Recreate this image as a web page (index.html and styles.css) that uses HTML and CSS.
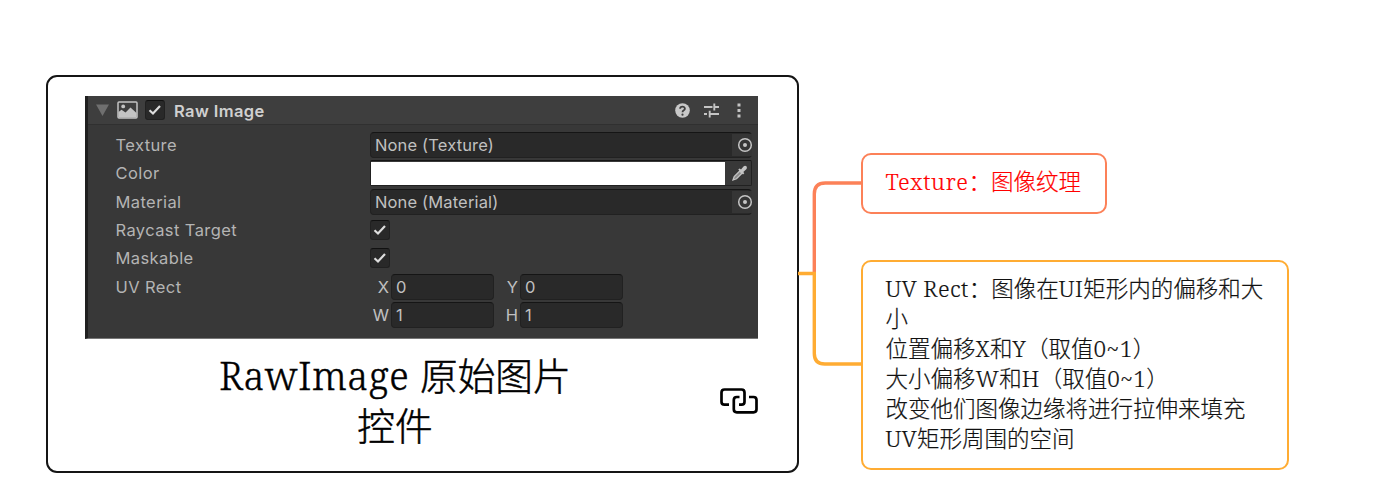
FILE: index.html
```html
<!DOCTYPE html>
<html lang="zh-CN">
<head>
<meta charset="utf-8">
<title>RawImage</title>
<link rel="stylesheet" href="styles.css">
</head>
<body>
<main class="map">
  <section class="root-node">
    <div class="inspector">
      <header class="head">
        <svg class="fold" width="13" height="12" viewBox="0 0 13 12"><path d="M0 0.5H13L6.5 12Z" fill="#6f6f6f"/></svg>
        <svg class="pic" width="21" height="18" viewBox="0 0 21 18"><rect x="1" y="1" width="19" height="16" rx="1" fill="none" stroke="#c4c4c4" stroke-width="1.5"/><circle cx="6.2" cy="5.4" r="1.9" fill="#c4c4c4"/><path d="M1.5 16.500V11L4.500 8.800L8.500 11.500L13.500 6.500L19.500 12V16.500Z" fill="#c4c4c4"/></svg>
        <span class="check"><svg width="14" height="12" viewBox="0 0 14 12"><path d="M1.500 6.200L5 9.500L12 2" /></svg></span>
        <h2 class="name">Raw Image</h2>
        <svg class="help" width="15" height="15" viewBox="0 0 15 15"><circle cx="7.500" cy="7.500" r="7.300" fill="#c8c8c8"/><path d="M5.100 5.800C5.100 2.800 9.900 2.900 9.900 5.700C9.900 7.400 7.500 7.300 7.500 9.200" fill="none" stroke="#3e3e3e" stroke-width="1.800"/><circle cx="7.500" cy="11.700" r="1.100" fill="#3e3e3e"/></svg>
        <svg class="preset" width="15" height="15" viewBox="0 0 15 15"><path d="M0 4H8.500M10.300 4H15M10.300 .500V7.500M0 11H3M5 11H15M5.700 7.700V14.500" fill="none" stroke="#c4c4c4" stroke-width="1.900"/></svg>
        <svg class="more" width="4" height="15" viewBox="0 0 4 15"><path d="M.500 .500h3v3h-3zM.500 6h3v3h-3zM.500 11.500h3v3h-3z" fill="#c4c4c4"/></svg>
      </header>
      <div class="rows">
        <div class="row"><span class="label">Texture</span><div class="field object"><span>None (Texture)</span><i class="picker"><svg width="16" height="16" viewBox="0 0 16 16"><circle cx="8" cy="8" r="6.300"/><circle class="dot" cx="8" cy="8" r="2"/></svg></i></div></div>
        <div class="row"><span class="label">Color</span><div class="field color"><i class="swatch"></i><svg width="17" height="17" viewBox="0 0 17 17"><path d="M2 15L3.200 11.500L8.800 6L11 8.200L5.500 13.800Z" fill="#888" stroke="#c4c4c4" stroke-width="1.300"/><path d="M7.200 4.500L8.700 3.500L10 4.600L12.500 1.500C14.700-.3 17 2 15.300 4.300L12.300 6.900L13.300 8.300L12 9.500Z" fill="#c4c4c4"/></svg></div></div>
        <div class="row"><span class="label">Material</span><div class="field object"><span>None (Material)</span><i class="picker"><svg width="16" height="16" viewBox="0 0 16 16"><circle cx="8" cy="8" r="6.300"/><circle class="dot" cx="8" cy="8" r="2"/></svg></i></div></div>
        <div class="row"><span class="label">Raycast Target</span><span class="check"><svg width="14" height="12" viewBox="0 0 14 12"><path d="M1.500 6.200L5 9.500L12 2"/></svg></span></div>
        <div class="row"><span class="label">Maskable</span><span class="check"><svg width="14" height="12" viewBox="0 0 14 12"><path d="M1.500 6.200L5 9.500L12 2"/></svg></span></div>
        <div class="row"><span class="label">UV Rect</span><div class="pair"><span class="axis">X</span><span class="field num">0</span><span class="axis">Y</span><span class="field num">0</span></div></div>
        <div class="row"><span class="label"></span><div class="pair"><span class="axis">W</span><span class="field num">1</span><span class="axis">H</span><span class="field num">1</span></div></div>
      </div>
    </div>
    <div class="caption">
      <h1 class="title"><span class="latin">RawImage </span>原始图片<br>控件</h1>
      <svg class="link" width="38" height="26" viewBox="0 0 38 26"><path d="M9 16.700H4.500Q1.500 16.700 1.500 13.700V4.500Q1.500 1.500 4.500 1.500H21.500Q24.500 1.500 24.500 4.500V13.700Q24.500 16.700 21.500 16.700H19M19.500 9H16.800Q13.800 9 13.800 12V21.300Q13.800 24.300 16.800 24.300H33.500Q36.500 24.300 36.500 21.300V12Q36.500 9 33.500 9H29" fill="none" stroke="#000" stroke-width="2.700"/></svg>
    </div>
  </section>
  <svg class="branches" width="65" height="240" viewBox="0 0 65 240" fill="none" stroke-width="3.400">
    <path d="M16.300 124V44Q16.300 33 27.300 33H65" stroke="#fc8158"/>
    <path d="M0 123.500H16.300V203.500Q16.300 214 26.800 214H65" stroke="#ffac33"/>
  </svg>
  <div class="topics">
    <section class="topic coral"><p><span class="latin">Texture</span>：图像纹理</p></section>
    <section class="topic amber"><p><span class="latin">UV Rect</span>：图像在<span class="latin">UI</span>矩形内的偏移和大<br>小<br>位置偏移<span class="latin">X</span>和<span class="latin">Y</span>（取值<span class="latin">0~1</span>）<br>大小偏移<span class="latin">W</span>和<span class="latin">H</span>（取值<span class="latin">0~1</span>）<br>改变他们图像边缘将进行拉伸来填充<br><span class="latin">UV</span>矩形周围的空间</p></section>
  </div>
</main>
</body>
</html>
```
FILE: styles.css
```css
* { box-sizing: border-box; }
body { margin: 0; background: #fff; }
svg { display: block; flex: none; }
p, h1, h2 { margin: 0; font-weight: 300; }
.map { width: 1380px; height: 501px; display: flex; align-items: flex-start; padding-left: 45.500px; overflow: hidden; }
.root-node { width: 753.500px; height: 398px; margin-top: 75px; padding: 19px 37.500px; border: 2.500px solid #151515; border-radius: 11px; flex: none; }
.inspector { width: 673px; height: 243px; background: #383838; border-left: 3px solid #202020; border-bottom: 1px solid #777; font: 16.500px/20px Inter, "Liberation Sans", sans-serif; color: #c0c0c0; }
.head { height: 29px; display: flex; align-items: center; background: #3e3e3e; border-bottom: 1px solid #303030; padding: 0 17px 0 8px; }
.pic { margin-left: 8px; }
.head .check { margin-left: 7px; }
.name { font-size: 16.500px; font-weight: 600; margin-left: 9px; margin-right: auto; color: #d0d0d0; letter-spacing: .4px; padding-top: 2px; }
.preset { margin-left: 14px; }
.more { margin-left: 18px; }
.check { width: 20px; height: 20px; display: flex; align-items: center; justify-content: center; background: #292929; border: 1px solid #212121; border-top-color: #111; border-radius: 3px; }
.check path { fill: none; stroke: #ddd; stroke-width: 2.200; }
.rows { display: grid; grid-auto-rows: 28.400px; padding-top: 5.700px; }
.row { display: grid; grid-template-columns: 254.500px 382px; padding-left: 27.500px; align-items: center; }
.label { letter-spacing: .4px; color: #b4b4b4; }
.field { height: 26px; border: 1px solid #212121; border-top-color: #151515; border-radius: 4px; background: #292929; display: flex; align-items: center; }
.object { padding-left: 4px; justify-content: space-between; letter-spacing: .15px; }
.picker { width: 20px; height: 22px; background: #353535; display: flex; align-items: center; justify-content: center; margin-right: -1px; }
.picker svg { fill: none; stroke: #c4c4c4; stroke-width: 1.500; margin-right: -6px; }
.picker .dot { fill: #c4c4c4; stroke: none; }
.color { background: #383838; border-radius: 2px; gap: 6px; }
.swatch { width: 354px; height: 23px; background: #fff; flex: none; }
.pair { display: grid; grid-template-columns: 21px 103px 26px 103px; align-items: center; }
.axis { text-align: right; padding-right: 2px; }
.num { padding-left: 4px; }
.caption { display: flex; align-items: flex-start; padding-top: 9.500px; }
.title { width: 620px; text-align: center; font: 300 37.700px/50px "Noto Sans CJK SC", sans-serif; color: #000; -webkit-text-stroke: .5px; }
.link { margin: 39.500px 0 0 15px; }
.latin { font-family: "Noto Serif", "Droid Serif", "DejaVu Serif", serif; letter-spacing: .02em; line-height: 0; }
.branches { width: 65px; height: 240px; margin: 150px -2px 0 -1px; }
.topics { display: flex; flex-direction: column; align-items: flex-start; gap: 46px; margin-top: 153px; }
.topic { border: 2.500px solid; border-radius: 10px; padding: 10px 22.500px; font: 300 22.500px/30px "Noto Sans CJK SC", sans-serif; white-space: nowrap; -webkit-text-stroke: .2px; }
.coral { width: 246px; height: 61px; border-color: #fc8158; }
.coral p { color: #f00; }
.coral .latin { letter-spacing: .03em; }
.amber { width: 428px; height: 210px; border-color: #ffac33; }
.amber p { color: #111; }
```
